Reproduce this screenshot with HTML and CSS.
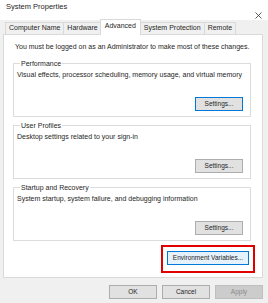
FILE: index.html
```html
<!DOCTYPE html>
<html>
<head>
<meta charset="utf-8">
<link rel="stylesheet" href="styles.css">
</head>
<body>
<div class="window">
  <div class="titlebar">
    <span class="title">System Properties</span>
    <svg class="close" width="7" height="7" viewBox="0 0 7 7"><path d="M0.5 0.5 L6.5 6.5 M6.5 0.5 L0.5 6.5" stroke="#333" stroke-width="0.8" fill="none"/></svg>
  </div>
  <div class="tabs">
    <div class="tab">Computer Name</div>
    <div class="tab">Hardware</div>
    <div class="tab active">Advanced</div>
    <div class="tab">System Protection</div>
    <div class="tab">Remote</div>
  </div>
  <div class="panel">
    <p class="note">You must be logged on as an Administrator to make most of these changes.</p>
    <fieldset class="group">
      <legend>Performance</legend>
      <p class="desc">Visual effects, processor scheduling, memory usage, and virtual memory</p>
      <div class="actions"><button class="btn focused">Settings...</button></div>
    </fieldset>
    <fieldset class="group">
      <legend>User Profiles</legend>
      <p class="desc">Desktop settings related to your sign-in</p>
      <div class="actions"><button class="btn">Settings...</button></div>
    </fieldset>
    <fieldset class="group">
      <legend>Startup and Recovery</legend>
      <p class="desc">System startup, system failure, and debugging information</p>
      <div class="actions"><button class="btn">Settings...</button></div>
    </fieldset>
    <div class="env-row">
      <div class="highlight"><button class="btn hover env">Environment Variables...</button></div>
    </div>
  </div>
  <div class="footer">
    <button class="btn foot">OK</button>
    <button class="btn foot">Cancel</button>
    <button class="btn foot disabled">Apply</button>
  </div>
</div>
</body>
</html>
```
FILE: styles.css
```css
* { box-sizing: border-box; }
html, body { margin: 0; padding: 0; }
body {
  width: 268px;
  height: 303px;
  background: #f0f0f0;
  font-family: "Liberation Sans", Arial, sans-serif;
  font-size: 7px;
  color: #262626;
  overflow: hidden;
}
.window { width: 268px; height: 303px; display: flex; flex-direction: column; }
.titlebar {
  height: 20px;
  background: #ffffff;
  display: flex;
  align-items: flex-start;
  justify-content: space-between;
  padding: 2px 6px 0 6px;
}
.title { font-size: 7.5px; line-height: 9px; }
.close { margin-top: 10px; margin-right: 0; }
.tabs {
  display: flex;
  align-items: flex-end;
  padding-left: 5px;
  height: 15px;
  margin-top: -1px;
  position: relative;
  z-index: 1;
}
.tab {
  height: 12px;
  line-height: 10px;
  padding: 0 3px;
  border: 1px solid #d9d9d9;
  border-bottom: none;
  background: #f0f0f0;
  margin-right: -1px;
  white-space: nowrap;
}
.tab.active {
  height: 16px;
  background: #ffffff;
  line-height: 12px;
  padding: 0 4px;
  margin: 0 -1px 0 -1px;
  position: relative;
  z-index: 2;
  top: 1px;
}
.panel {
  margin: 0 5px 0 3px;
  height: 244px;
  background: #ffffff;
  border: 1px solid #d9d9d9;
  padding: 7px 7px 0 9px;
}
.note { margin: 0 0 7px 2px; line-height: 10px; white-space: nowrap; }
.group {
  margin: 0 4px 4px 0;
  padding: 2px 7px 7px 3px;
  border: 1px solid #dcdcdc;
  height: 58px;
}
.group legend {
  padding: 0 1px;
  margin-left: 3px;
  line-height: 9px;
}
.desc { margin: 0; line-height: 10px; white-space: nowrap; }
.actions { display: flex; justify-content: flex-end; margin-top: 17px; }
.btn {
  font-family: "Liberation Sans", Arial, sans-serif;
  font-size: 6.5px;
  color: #262626;
  background: #e1e1e1;
  border: 1px solid #adadad;
  height: 14px;
  width: 48px;
  padding: 0;
  margin: 0;
  line-height: 12px;
}
.btn.focused { border-color: #0078d7; }
.env-row { display: flex; justify-content: flex-end; margin-top: 0; }
.highlight {
  border: 2px solid #e00000;
  padding: 4px 4px 6px 4px;
}
.btn.env { width: 82px; }
.btn.hover { background: #e5f1fb; border-color: #0078d7; }
.footer {
  display: flex;
  justify-content: flex-end;
  gap: 5px;
  padding: 7px 5px 0 0;
}
.btn.foot { width: 48px; }
.btn.disabled { background: #cccccc; border-color: #bfbfbf; color: #8a8a8a; }
```
